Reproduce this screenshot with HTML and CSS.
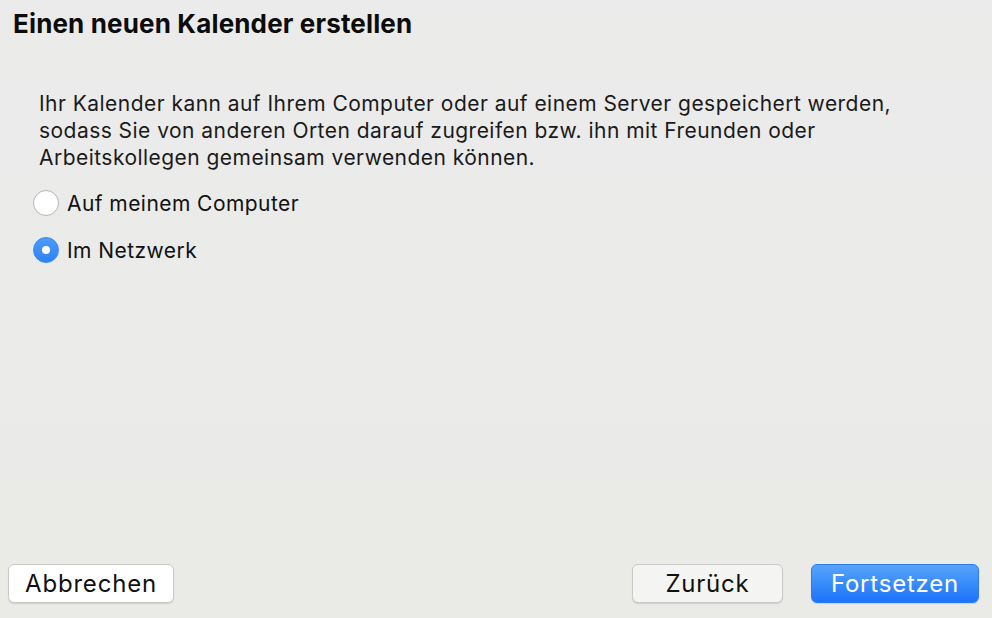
FILE: index.html
```html
<!DOCTYPE html>
<html lang="de">
<head>
  <meta charset="UTF-8">
  <title>Einen neuen Kalender erstellen</title>
  <link rel="stylesheet" href="styles.css">
</head>
<body>
  <div class="dialog">
    <h1 class="title">Einen neuen Kalender erstellen</h1>

    <div class="content">
      <p class="intro">Ihr Kalender kann auf Ihrem Computer oder auf einem Server gespeichert werden,<br>sodass Sie von anderen Orten darauf zugreifen bzw. ihn mit Freunden oder<br>Arbeitskollegen gemeinsam verwenden können.</p>

      <label class="radio">
        <span class="radio-dot"></span>
        <span>Auf meinem Computer</span>
      </label>
      <label class="radio checked">
        <span class="radio-dot"></span>
        <span>Im Netzwerk</span>
      </label>
    </div>

    <div class="actions">
      <button class="btn btn-cancel">Abbrechen</button>
      <div class="spacer"></div>
      <button class="btn btn-back">Zurück</button>
      <button class="btn btn-primary">Fortsetzen</button>
    </div>
  </div>
</body>
</html>
```

FILE: styles.css
```css
html, body { margin: 0; padding: 0; }
body { font-family: Inter, "Noto Sans", sans-serif; color: #111; background: linear-gradient(#ebebeb, #eaeae7); }
.dialog { height: 618px; display: flex; flex-direction: column; box-sizing: border-box; }
.title { margin: 0; padding: 8px 0 0 13px; font-size: 26px; font-weight: 700; letter-spacing: 0.15px; line-height: 32px; color: #0c0c0c; }
.content { flex: 1; padding: 0 0 0 33px; }
.intro { margin: 50px 0 19px 6px; font-size: 21px; letter-spacing: 0.46px; line-height: 27px; color: #1a1a1a; }
.radio { display: flex; align-items: center; gap: 8px; font-size: 21px; letter-spacing: 0.44px; height: 26px; margin-bottom: 21px; color: #111; }
.radio-dot { width: 24px; height: 24px; border-radius: 50%; background: #fff; border: 1px solid #b5b5b5; box-sizing: content-box; display: flex; align-items: center; justify-content: center; }
.radio.checked .radio-dot { background: linear-gradient(#4d9bfb, #2f80f6); border-color: #3a86f5; }
.radio.checked .radio-dot::after { content: ""; width: 8px; height: 8px; border-radius: 50%; background: #fff; }
.actions { display: flex; align-items: center; padding: 0 13px 15px 8px; }
.spacer { flex: 1; }
.btn { font-family: inherit; font-size: 24px; letter-spacing: 0.8px; height: 39px; padding: 0; border-radius: 6px; border: 1px solid #c9c9c9; background: #fff; color: #111; box-shadow: 0 1px 1px rgba(0,0,0,0.12); }
.btn-cancel { width: 166px; }
.btn-back { background: #f4f4f3; width: 151px; margin-right: 28px; }
.btn-primary { background: linear-gradient(#57a4fc, #1b73f9); border-color: #2b7bf5; color: #fff; width: 168px; }
```
